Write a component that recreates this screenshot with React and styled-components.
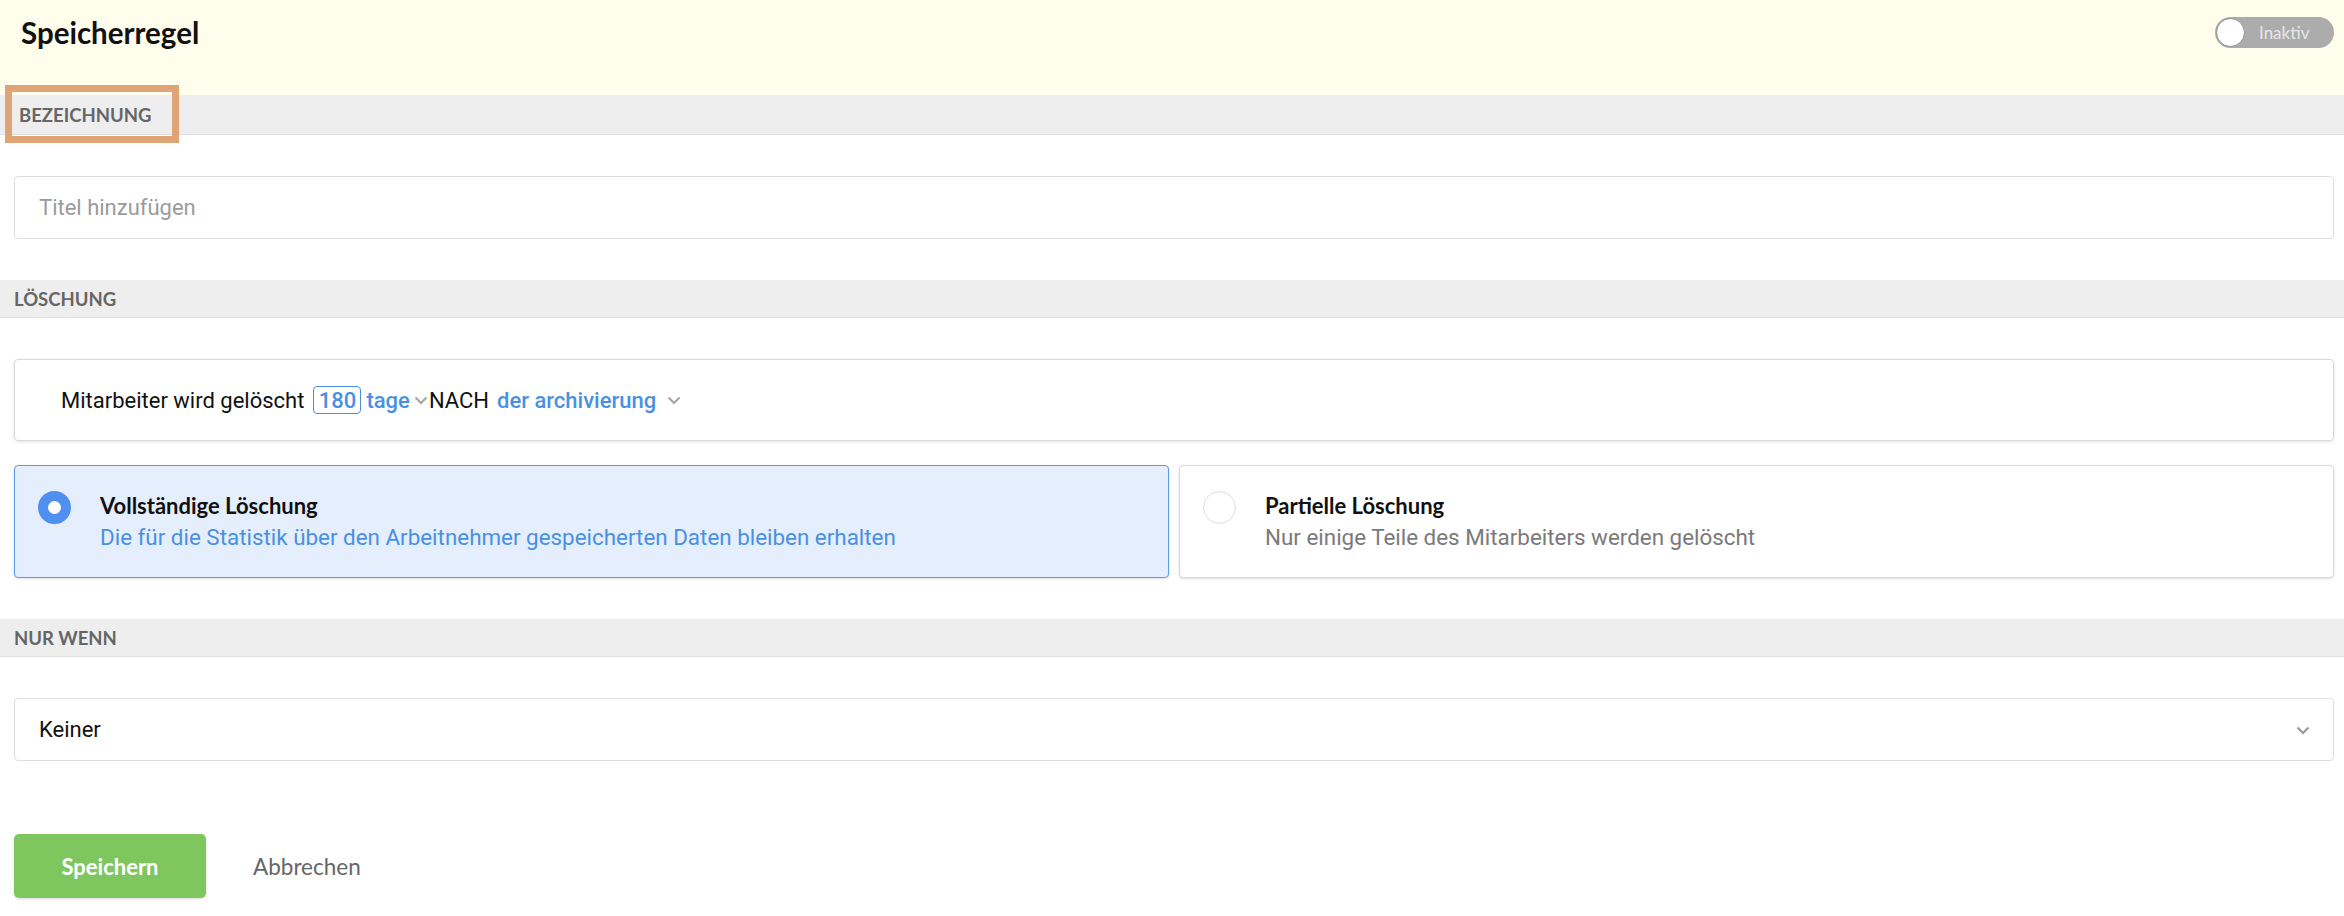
import React from "react";
import styled, { createGlobalStyle } from "styled-components";

const Global = createGlobalStyle`
  html, body { margin: 0; padding: 0; background: #fff; }
  body { font-family: Roboto, "Liberation Sans", Arial, sans-serif; }
  * { box-sizing: border-box; }
`;

const Page = styled.div`
  width: 2344px;
  min-height: 916px;
  display: flex;
  flex-direction: column;
`;

const Header = styled.header`
  height: 95px;
  background: #fffeed;
  display: flex;
  align-items: center;
  justify-content: space-between;
  padding: 0 10px 0 21px;
`;

const Title = styled.h1`
  margin: 0;
  font-family: Lato, "Open Sans", sans-serif;
  font-weight: 700;
  font-size: 29.5px;
  color: #111;
  margin-top: -30px;
`;

const Toggle = styled.div`
  width: 119px;
  height: 31px;
  border-radius: 16px;
  background: #acacac;
  display: flex;
  align-items: center;
  padding-left: 1px;
  margin-top: -30px;
`;

const Knob = styled.span`
  width: 29px;
  height: 29px;
  border-radius: 50%;
  background: #fff;
  border: 1px solid #8f8f8f;
`;

const ToggleText = styled.span`
  margin-left: 14px;
  font-family: Lato, sans-serif;
  font-size: 17px;
  color: #e6e6e6;
`;

const Band = styled.div`
  position: relative;
  height: ${(p) => p.$h || 38}px;
  background: #eeeeee;
  border-bottom: 1px solid #e0e0e0;
  display: flex;
  align-items: center;
  padding-left: ${(p) => (p.$offset ? "19px" : "14px")};
  font-family: Lato, "Open Sans", sans-serif;
  font-weight: 700;
  font-size: 18.5px;
  color: #666;
`;

const Highlight = styled.span`
  position: absolute;
  left: 5px;
  top: -10px;
  width: 174px;
  height: 58px;
  border: 7px solid #dea476;
  pointer-events: none;
`;

const Section = styled.section`
  padding: 41px 10px 41px 14px;
  display: flex;
  flex-direction: column;
  gap: 24px;
`;

const Field = styled.div`
  height: 63px;
  border: 1px solid #dedede;
  border-radius: 4px;
  display: flex;
  align-items: center;
  justify-content: space-between;
  padding: 0 22px 0 24px;
  font-size: 22px;
  color: ${(p) => (p.$placeholder ? "#9b9b9b" : "#111")};
`;

const RuleBox = styled.div`
  height: 82px;
  border: 1px solid #d9d9d9;
  border-radius: 4px;
  box-shadow: 0 1px 3px rgba(0, 0, 0, 0.12);
  display: flex;
  align-items: center;
  padding-left: 46px;
  font-size: 22px;
  color: #111;
`;

const NumBox = styled.span`
  display: inline-flex;
  align-items: center;
  justify-content: center;
  width: 48px;
  height: 28px;
  margin-left: 9px;
  border: 1.5px solid #4a90e2;
  border-radius: 4px;
  color: #4a90e2;
  font-weight: 500;
`;

const Link = styled.span`
  color: #4a90e2;
  font-weight: 500;
  margin-left: ${(p) => p.$ml || "0"};
`;

const ChevronIcon = styled.svg`
  flex: none;
  margin-left: ${(p) => p.$ml}px;
`;

const Chevron = ({ size = 16, color = "#a6a6a6", ml = 3 }) => (
  <ChevronIcon width={size} height={size} viewBox="0 0 16 16" $ml={ml}>
    <polyline points="2.5,5.5 8,11 13.5,5.5" fill="none" stroke={color} strokeWidth="2.2" />
  </ChevronIcon>
);

const Cards = styled.div`
  display: grid;
  grid-template-columns: 1fr 1fr;
  gap: 10px;
`;

const Card = styled.div`
  height: 113px;
  border-radius: 4px;
  border: 1px solid ${(p) => (p.$active ? "#5a9bf0" : "#d9d9d9")};
  background: ${(p) => (p.$active ? "#e4eefc" : "#fff")};
  box-shadow: 0 1px 3px rgba(0, 0, 0, 0.12);
  display: flex;
  align-items: flex-start;
  padding: 24px 0 0 23px;
  gap: 29px;
`;

const Radio = styled.span`
  flex: none;
  width: 33px;
  height: 33px;
  border-radius: 50%;
  margin-top: 1px;
  background: #fff;
  border: ${(p) => (p.$checked ? "10.5px solid #4f8fef" : "1px solid #dcdcdc")};
`;

const CardText = styled.div`
  display: flex;
  flex-direction: column;
  gap: 5px;
  padding-top: 2px;
`;

const CardTitle = styled.div`
  font-family: Lato, sans-serif;
  font-weight: 700;
  font-size: 22px;
  color: #111;
`;

const CardSub = styled.div`
  font-size: 22.4px;
  color: ${(p) => (p.$active ? "#4a90e2" : "#7a7a7a")};
`;

const Actions = styled.div`
  padding: 32px 14px 0;
  display: flex;
  align-items: center;
  gap: 47px;
`;

const SaveButton = styled.button`
  width: 192px;
  height: 64px;
  border: none;
  border-radius: 5px;
  background: #7fc65f;
  color: #fff;
  font-family: Lato, sans-serif;
  font-weight: 700;
  font-size: 22px;
  box-shadow: 0 1px 3px rgba(0, 0, 0, 0.15);
`;

const CancelButton = styled.button`
  border: none;
  background: none;
  padding: 0;
  font-family: Lato, sans-serif;
  font-size: 22.5px;
  color: #666;
`;

export default function App() {
  return (
    <Page>
      <Global />
      <Header>
        <Title>Speicherregel</Title>
        <Toggle>
          <Knob />
          <ToggleText>Inaktiv</ToggleText>
        </Toggle>
      </Header>

      <Band $offset $h={40}>
        BEZEICHNUNG
        <Highlight />
      </Band>
      <Section>
        <Field $placeholder>Titel hinzufügen</Field>
      </Section>

      <Band>LÖSCHUNG</Band>
      <Section>
        <RuleBox>
          Mitarbeiter wird gelöscht
          <NumBox>180</NumBox>
          <Link $ml="5px">tage</Link>
          <Chevron />
          NACH
          <Link $ml="8px">der archivierung</Link>
          <Chevron ml={10} />
        </RuleBox>
        <Cards>
          <Card $active>
            <Radio $checked />
            <CardText>
              <CardTitle>Vollständige Löschung</CardTitle>
              <CardSub $active>
                Die für die Statistik über den Arbeitnehmer gespeicherten Daten bleiben erhalten
              </CardSub>
            </CardText>
          </Card>
          <Card>
            <Radio />
            <CardText>
              <CardTitle>Partielle Löschung</CardTitle>
              <CardSub>Nur einige Teile des Mitarbeiters werden gelöscht</CardSub>
            </CardText>
          </Card>
        </Cards>
      </Section>

      <Band>NUR WENN</Band>
      <Section>
        <Field>
          Keiner
          <Chevron size={16} color="#9a9a9a" ml={0} />
        </Field>
      </Section>

      <Actions>
        <SaveButton>Speichern</SaveButton>
        <CancelButton>Abbrechen</CancelButton>
      </Actions>
    </Page>
  );
}
